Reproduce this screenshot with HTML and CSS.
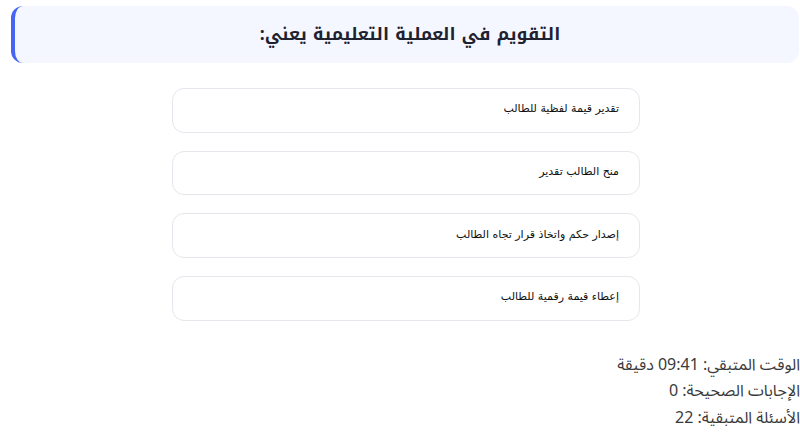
FILE: index.html
```html
<!DOCTYPE html>
<html lang="ar" dir="rtl">
<head>
    <meta charset="UTF-8">
    <meta name="viewport" content="width=device-width, initial-scale=1.0">
    <title>اختبار التقويم</title>
    <link rel="stylesheet" href="styles.css">
</head>
<body>
<!-- Question header -->
<div class="question-box">
  <h2 class="question-text">التقويم في العملية التعليمية يعني:</h2>
</div>

<!-- Answer options -->
<div class="options-list">
  <div class="option-item">تقدير قيمة لفظية للطالب</div>
  <div class="option-item">منح الطالب تقدير</div>
  <div class="option-item">إصدار حكم واتخاذ قرار تجاه الطالب</div>
  <div class="option-item">إعطاء قيمة رقمية للطالب</div>
</div>

<!-- Quiz stats -->
<div class="quiz-stats">
  <div class="stat-line">الوقت المتبقي: 09:41 دقيقة</div>
  <div class="stat-line">الإجابات الصحيحة: 0</div>
  <div class="stat-line">الأسئلة المتبقية: 22</div>
</div>
</body>
</html>
```
FILE: styles.css
```css
:root {
    --accent-color: #4466f2;
    --heading-color: #1e2230;
    --box-bg: #f4f7ff;
    --border-color: #e4e7ec;
}

body {
    margin: 0;
    background-color: #ffffff;
    font-family: "Noto Sans Arabic", "Noto Sans", sans-serif;
}

/* Question header */
.question-box {
    margin: 6px 1px 0 11px;
    height: 57px;
    display: flex;
    align-items: center;
    justify-content: center;
    background-color: var(--box-bg);
    border-left: 4px solid var(--accent-color);
    border-radius: 12px;
}

.question-text {
    margin: 0;
    font-family: "Noto Kufi Arabic", sans-serif;
    font-size: 17.5px;
    font-weight: 700;
    color: var(--heading-color);
    padding-left: 6px;
}

/* Options */
.options-list {
    width: 468px;
    margin: 25px auto 0;
    padding-left: 12px;
    display: flex;
    flex-direction: column;
    gap: 18.2px;
}

.option-item {
    height: 44.5px;
    box-sizing: border-box;
    display: flex;
    align-items: center;
    padding: 0 20px 3px;
    border: 1.5px solid var(--border-color);
    border-radius: 12px;
    background-color: #ffffff;
    font-family: "DejaVu Sans", sans-serif;
    font-size: 11px;
    color: #111111;
}

/* Stats */
.quiz-stats {
    margin-top: 31px;
    font-size: 16px;
    color: #3a3a3a;
}

.stat-line {
    line-height: 26.5px;
}
```
